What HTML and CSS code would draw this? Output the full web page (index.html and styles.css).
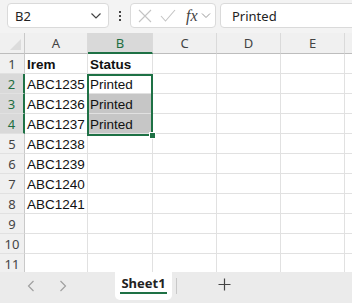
FILE: index.html
```html
<!DOCTYPE html>
<html lang="en">
<head>
    <meta charset="UTF-8">
    <title>Sheet1</title>
    <link rel="stylesheet" href="styles.css">
</head>
<body>
    <div class="app">
        <!-- Formula bar -->
        <div class="toolbar">
            <div class="name-box">
                <span>B2</span>
                <svg width="12" height="8" viewBox="0 0 12 8"><path d="M1.5 1.5 L6 6 L10.5 1.5" fill="none" stroke="#444" stroke-width="1.2"/></svg>
            </div>
            <div class="dots"><i></i><i></i><i></i></div>
            <div class="fx-box">
                <svg width="14" height="14" viewBox="0 0 14 14"><path d="M1 1 L13 13 M13 1 L1 13" stroke="#c4c4c4" stroke-width="1.1"/></svg>
                <svg width="16" height="14" viewBox="0 0 16 14"><path d="M1 7 L5.5 12 L15 1" fill="none" stroke="#c4c4c4" stroke-width="1.1"/></svg>
                <span class="fx">fx</span>
                <svg width="10" height="7" viewBox="0 0 10 7"><path d="M1 1.5 L5 5.5 L9 1.5" fill="none" stroke="#999" stroke-width="1"/></svg>
            </div>
            <div class="formula">Printed</div>
        </div>

        <!-- Grid -->
        <div class="sheet">
            <div class="grid">
                <div class="corner"></div>
                <div class="col-head">A</div>
                <div class="col-head active">B</div>
                <div class="col-head">C</div>
                <div class="col-head">D</div>
                <div class="col-head">E</div>
                <div class="col-head"></div>
            </div>
            <div id="rows"></div>
            <div class="selection"><span class="handle"></span></div>
        </div>

        <!-- Sheet tabs -->
        <div class="tabs">
            <div class="nav">
                <svg width="8" height="12" viewBox="0 0 8 12"><path d="M6.5 1 L1.5 6 L6.5 11" fill="none" stroke="#a0a0a0" stroke-width="1.2"/></svg>
                <svg width="8" height="12" viewBox="0 0 8 12"><path d="M1.5 1 L6.5 6 L1.5 11" fill="none" stroke="#a0a0a0" stroke-width="1.2"/></svg>
            </div>
            <div class="tab"><span>Sheet1</span></div>
            <div class="tab-sep"></div>
            <div class="add">
                <svg width="13" height="13" viewBox="0 0 13 13"><path d="M6.5 0.5 V12.5 M0.5 6.5 H12.5" stroke="#444" stroke-width="1.2"/></svg>
            </div>
        </div>
    </div>

    <script>
        const data = [
            ["Irem", "Status"],
            ["ABC1235", "Printed"],
            ["ABC1236", "Printed"],
            ["ABC1237", "Printed"],
            ["ABC1238", ""],
            ["ABC1239", ""],
            ["ABC1240", ""],
            ["ABC1241", ""],
            ["", ""],
            ["", ""],
            ["", ""]
        ];
        const rows = document.getElementById("rows");

        data.forEach((row, i) => {
            const n = i + 1;
            const r = document.createElement("div");
            r.className = "grid";
            const picked = n >= 2 && n <= 4;
            let html = `<div class="row-head ${picked ? "active" : ""}">${n}</div>`;
            html += `<div class="cell ${n === 1 ? "bold" : ""}">${row[0]}</div>`;
            html += `<div class="cell ${n === 1 ? "bold" : ""} ${n === 3 || n === 4 ? "filled" : ""}">${row[1]}</div>`;
            html += `<div class="cell"></div><div class="cell"></div><div class="cell"></div><div class="cell"></div>`;
            r.innerHTML = html;
            rows.appendChild(r);
        });
    </script>
</body>
</html>
```

FILE: styles.css
```css
* {
    margin: 0;
    padding: 0;
    box-sizing: border-box;
}

body {
    font-family: "Segoe UI", "Noto Sans", "Liberation Sans", sans-serif;
    background: #fff;
    color: #222;
    overflow: hidden;
}

.app {
    width: 352px;
    height: 303px;
    display: flex;
    flex-direction: column;
    overflow: hidden;
}

/* Formula bar */
.toolbar {
    height: 33px;
    flex: none;
    display: flex;
    align-items: flex-start;
    padding: 3px 0 0 7px;
    background: #f3f3f3;
}

.name-box {
    width: 102px;
    height: 25px;
    display: flex;
    align-items: center;
    justify-content: space-between;
    padding: 0 6px 0 7px;
    background: #fff;
    border: 1px solid #dadada;
    border-radius: 4px;
    font-size: 13px;
    color: #222;
}

.dots {
    width: 21px;
    height: 25px;
    display: flex;
    flex-direction: column;
    align-items: center;
    justify-content: center;
    gap: 2px;
}

.dots i {
    width: 2px;
    height: 2px;
    background: #444;
}

.fx-box {
    width: 86px;
    height: 25px;
    display: flex;
    align-items: center;
    gap: 8px;
    padding-left: 7px;
    background: #fff;
    border: 1px solid #dadada;
    border-radius: 4px;
}

.fx-box .fx {
    font-family: "Liberation Serif", "DejaVu Serif", serif;
    font-style: italic;
    font-size: 16px;
    color: #444;
    margin-left: 2px;
    margin-right: -5px;
}

.formula {
    flex: 1;
    height: 25px;
    margin-left: 4px;
    margin-right: -10px;
    padding-left: 11px;
    display: flex;
    align-items: center;
    background: #fff;
    border: 1px solid #dadada;
    border-radius: 4px;
    font-size: 13px;
    color: #222;
}

/* Grid */
.sheet {
    position: relative;
    height: 239px;
    flex: none;
    overflow: hidden;
}

.grid {
    display: grid;
    grid-template-columns: 25px 63px 65px 64px 64px 64px 20px;
}

.corner {
    height: 21px;
    background: #f0f0f0;
    border-right: 1px solid #c9c9c9;
    border-bottom: 1px solid #bdbdbd;
    position: relative;
}

.corner::after {
    content: "";
    position: absolute;
    right: 3px;
    bottom: 3px;
    border-left: 11px solid transparent;
    border-bottom: 11px solid #dcdcdc;
}

.col-head {
    height: 21px;
    background: #f0f0f0;
    border-right: 1px solid #dadada;
    border-bottom: 1px solid #bdbdbd;
    display: flex;
    align-items: center;
    justify-content: center;
    font-size: 13px;
    color: #444;
}

.col-head.active {
    background: #d9d9d9;
    border-bottom: 2px solid #1e7145;
    color: #1e6e42;
}

.row-head {
    height: 20px;
    background: #f0f0f0;
    border-right: 1px solid #c9c9c9;
    border-bottom: 1px solid #e1e1e1;
    display: flex;
    align-items: center;
    justify-content: center;
    font-size: 13px;
    color: #444;
}

.row-head.active {
    background: #d9d9d9;
    border-right: 2px solid #1e7145;
    color: #1e6e42;
}

.cell {
    height: 20px;
    border-right: 1px solid #e1e1e1;
    border-bottom: 1px solid #e1e1e1;
    padding: 2px 0 0 2px;
    font-family: "Liberation Sans", Arial, sans-serif;
    font-size: 13.5px;
    line-height: 18px;
    color: #111;
    white-space: nowrap;
}

.cell.bold {
    font-weight: bold;
}

.cell.filled {
    background: #c6c6c6;
}

.selection {
    position: absolute;
    left: 87px;
    top: 41px;
    width: 66px;
    height: 62px;
    border: 2px solid #1e7145;
}

.handle {
    position: absolute;
    right: -5px;
    bottom: -5px;
    width: 7px;
    height: 7px;
    background: #1e7145;
    border: 1px solid #fff;
}

/* Sheet tabs */
.tabs {
    flex: 1;
    display: flex;
    align-items: flex-start;
    background: #ebebeb;
}

.nav {
    width: 115px;
    height: 28px;
    display: flex;
    align-items: center;
    gap: 24px;
    padding-left: 27px;
}

.tab {
    width: 57px;
    height: 28px;
    background: #fff;
    border-radius: 0 0 5px 5px;
    display: flex;
    justify-content: center;
    padding-top: 4px;
}

.tab span {
    font-size: 13px;
    font-weight: bold;
    color: #222;
    line-height: 14px;
    padding: 0 1px;
    border-bottom: 2px solid #1e7145;
    height: 18px;
}

.tab-sep {
    width: 1px;
    height: 16px;
    margin: 6px 0 0 4px;
    background: #c8c8c8;
}

.add {
    height: 24px;
    display: flex;
    align-items: center;
    margin-left: 41px;
}
```
